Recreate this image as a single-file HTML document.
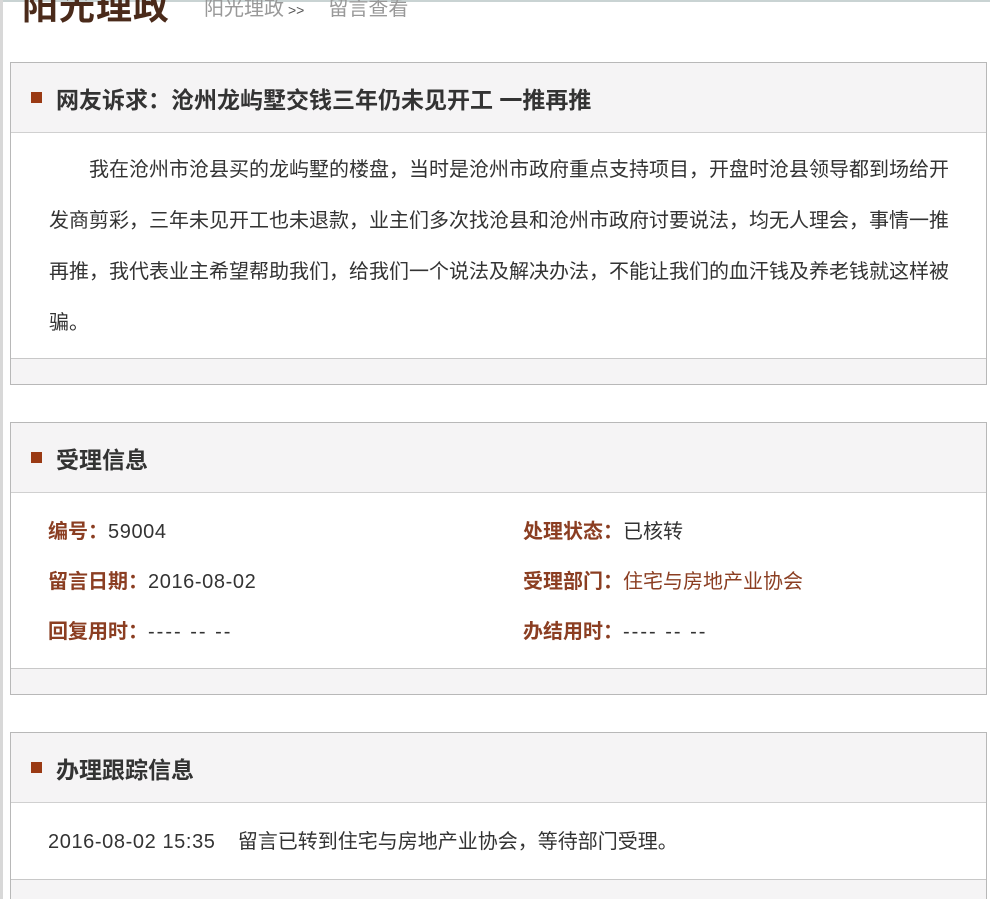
<!DOCTYPE html>
<html><head><meta charset="utf-8"><style>
*{margin:0;padding:0;box-sizing:border-box}
html,body{width:990px;height:899px;overflow:hidden}
body{background:#fff;font-family:"Liberation Sans","Noto Sans CJK SC",sans-serif;position:relative}
.lb{position:absolute;left:0;top:0;width:3px;height:899px;background:#d8d8d8}
.tb{position:absolute;left:0;top:0;width:990px;height:2px;background:#c9d3d3}
.logo{position:absolute;left:22px;top:-22px;font-size:36px;font-weight:bold;color:#4a2a1a;letter-spacing:1px;white-space:nowrap}
.bc{position:absolute;left:204px;top:-8px;font-size:20px;color:#999;white-space:nowrap}
.bc small{font-size:14px;color:#555;margin:0 24px 0 4px}
.p{position:absolute;left:10px;width:977px;border:1px solid #b8b8b8;background:#f5f4f5}
.h{height:70px;border-bottom:1px solid #d0d0d0;display:flex;align-items:center;padding-left:20px;font-size:23px;font-weight:bold;color:#333}
.h i{display:inline-block;width:11px;height:11px;background:#9a3a14;margin-right:14px}
.b{background:#fff;border-bottom:1px solid #c8c8c8}
.t{padding:12px 24px 0 38px;font-size:20px;line-height:51px;color:#333;text-indent:40px;height:225px}
.r{position:absolute;font-size:20px;color:#333;white-space:nowrap}
.r b{color:#8b3e22}
.n{letter-spacing:0.6px}
.d{letter-spacing:2px}
</style></head><body>
<div class="tb"></div><div class="lb"></div>
<div class="logo">阳光理政</div>
<div class="bc">阳光理政<small>&gt;&gt;</small>留言查看</div>

<div class="p" style="top:62px;height:323px">
<div class="h"><i></i>网友诉求：沧州龙屿墅交钱三年仍未见开工 一推再推</div>
<div class="b"><div class="t">我在沧州市沧县买的龙屿墅的楼盘，当时是沧州市政府重点支持项目，开盘时沧县领导都到场给开发商剪彩，三年未见开工也未退款，业主们多次找沧县和沧州市政府讨要说法，均无人理会，事情一推再推，我代表业主希望帮助我们，给我们一个说法及解决办法，不能让我们的血汗钱及养老钱就这样被骗。</div></div>
</div>

<div class="p" style="top:422px;height:273px">
<div class="h"><i></i>受理信息</div>
<div class="b" style="height:176px;position:relative">
<div class="r" style="left:37px;top:22px"><b>编号：</b><span class="n">59004</span></div>
<div class="r" style="left:37px;top:72px"><b>留言日期：</b><span class="n">2016-08-02</span></div>
<div class="r" style="left:37px;top:122px"><b>回复用时：</b><span class="d">---- -- --</span></div>
<div class="r" style="left:512px;top:22px"><b>处理状态：</b>已核转</div>
<div class="r" style="left:512px;top:72px"><b>受理部门：</b><span style="color:#8b3e22">住宅与房地产业协会</span></div>
<div class="r" style="left:512px;top:122px"><b>办结用时：</b><span class="d">---- -- --</span></div>
</div>
</div>

<div class="p" style="top:732px;height:200px">
<div class="h"><i></i>办理跟踪信息</div>
<div class="b" style="height:77px;position:relative">
<div class="r" style="left:37px;top:22px"><span class="n">2016-08-02 15:35</span>&nbsp;&nbsp;&nbsp;&nbsp;留言已转到住宅与房地产业协会，等待部门受理。</div>
</div>
</div>
</body></html>
